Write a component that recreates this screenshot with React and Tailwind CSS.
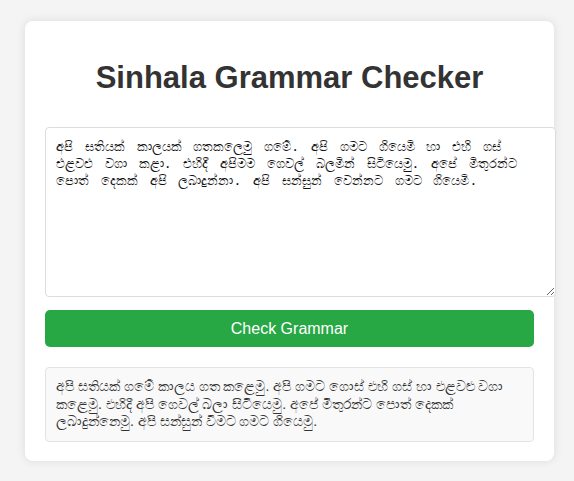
import React, { useState } from "react";

const INPUT_TEXT =
	"අපි සතියක් කාලයක් ගතකලෙමු ගමේ. අපි ගමට ගියෙමි හා එහි ගස් එළවළු වගා කළා. එහිදී අපිමම ගෙවල් බලමින් සිටියෙමු. අපේ මිතුරන්ට පොත් දෙකක් අපි ලබාදුන්නා. අපි සන්සුන් වෙන්නට ගමට ගියෙමි.";

const RESULT_TEXT =
	"අපි සතියක් ගමේ කාලය ගත කළෙමු. අපි ගමට ගොස් එහි ගස් හා එළවළු වගා කළෙමු. එහිදී අපි ගෙවල් බලා සිටියෙමු. අපේ මිතුරන්ට පොත් දෙකක් ලබාදුන්නෙමු. අපි සන්සුන් වීමට ගමට ගියෙමු.";

const App = () => {
	const [text, setText] = useState(INPUT_TEXT);

	return (
		<div className="min-h-[481px] bg-[#f4f4f4] pt-[21px] pb-5 pl-[25px] pr-5 font-['Liberation_Sans',Arial,sans-serif]">
			{/* CARD */}
			<div className="w-[529px] rounded-lg bg-white px-5 pt-[39px] pb-[19px] shadow-[0_0_10px_rgba(0,0,0,0.1)]">
				{/* TITLE */}
				<h1 className="text-center text-[31px] font-bold leading-[36px] text-[#333]">
					Sinhala Grammar Checker
				</h1>
				{/* INPUT */}
				<textarea
					className="mt-[31px] box-content block h-[148px] w-[489px] rounded border border-[#ddd] bg-white p-[10px] text-[13px] leading-[17px] [word-spacing:4px] text-[#111] outline-none font-['DejaVu_Sans_Mono',monospace]"
					value={text}
					onChange={(e) => setText(e.target.value)}
				/>
				{/* BUTTON */}
				<button className="mt-[13px] block h-[37px] w-full rounded-[5px] bg-[#28a745] text-base text-white">
					Check Grammar
				</button>
				{/* RESULT */}
				<div className="mt-5 rounded border border-[#e3e3e3] bg-[#f9f9f9] px-[10px] py-[10px] text-sm leading-[17.5px] text-[#333]">
					{RESULT_TEXT}
				</div>
			</div>
		</div>
	);
};

export default App;
